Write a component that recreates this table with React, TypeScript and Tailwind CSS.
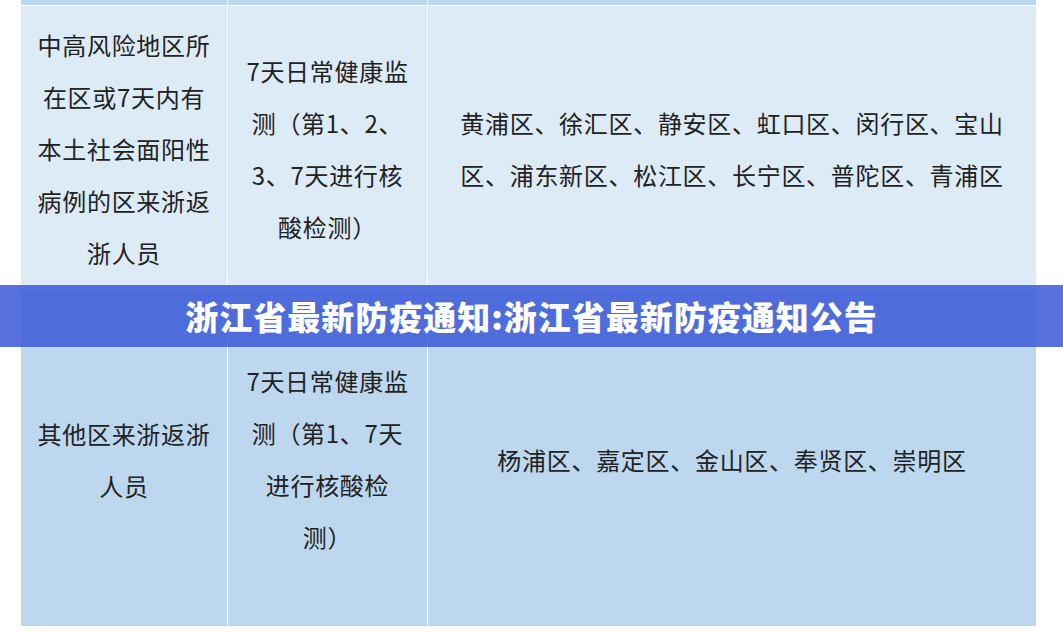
import React from "react";

const font = { fontFamily: '"Noto Sans CJK SC", "Noto Sans", sans-serif' };

function Lines({ lines }: { lines: string[] }) {
  return (
    <div className="flex flex-col items-center">
      {lines.map((l, i) => (
        <div key={i} className="whitespace-nowrap">
          {l}
        </div>
      ))}
    </div>
  );
}

export default function App() {
  return (
    <div
      className="relative w-[1063px] h-[632px] overflow-hidden bg-white text-[#222] text-[24px] leading-[52px] tracking-[0.7px]"
      style={font}
    >
      <div className="ml-[21px] w-[1015px] grid grid-cols-[206px_199px_608px] grid-rows-[5px_284px_335px] gap-px bg-white">
        <div className="bg-[#bdd7ee]" />
        <div className="bg-[#bdd7ee]" />
        <div className="bg-[#bdd7ee]" />

        <div className="bg-[#ddebf7] flex items-center justify-center pt-[1px]">
          <Lines
            lines={["中高风险地区所", "在区或7天内有", "本土社会面阳性", "病例的区来浙返", "浙人员"]}
          />
        </div>
        <div className="bg-[#ddebf7] flex items-center justify-center pt-[2px]">
          <Lines lines={["7天日常健康监", "测（第1、2、", "3、7天进行核", "酸检测）"]} />
        </div>
        <div className="bg-[#ddebf7] flex items-center justify-center pt-[2px]">
          <Lines
            lines={[
              "黄浦区、徐汇区、静安区、虹口区、闵行区、宝山",
              "区、浦东新区、松江区、长宁区、普陀区、青浦区",
            ]}
          />
        </div>

        <div className="bg-[#bdd7ee] flex items-center justify-center pt-[2px]">
          <Lines lines={["其他区来浙返浙", "人员"]} />
        </div>
        <div className="bg-[#bdd7ee] flex items-center justify-center">
          <Lines lines={["7天日常健康监", "测（第1、7天", "进行核酸检", "测）"]} />
        </div>
        <div className="bg-[#bdd7ee] flex items-center justify-center pt-[2px]">
          <Lines lines={["杨浦区、嘉定区、金山区、奉贤区、崇明区"]} />
        </div>
      </div>

      <div className="absolute left-0 right-0 top-[285px] h-[62px] bg-[rgba(60,90,218,0.86)] flex items-center justify-center">
        <span className="text-white text-[33px] font-black leading-none tracking-[1px]">
          浙江省最新防疫通知:浙江省最新防疫通知公告
        </span>
      </div>
    </div>
  );
}
